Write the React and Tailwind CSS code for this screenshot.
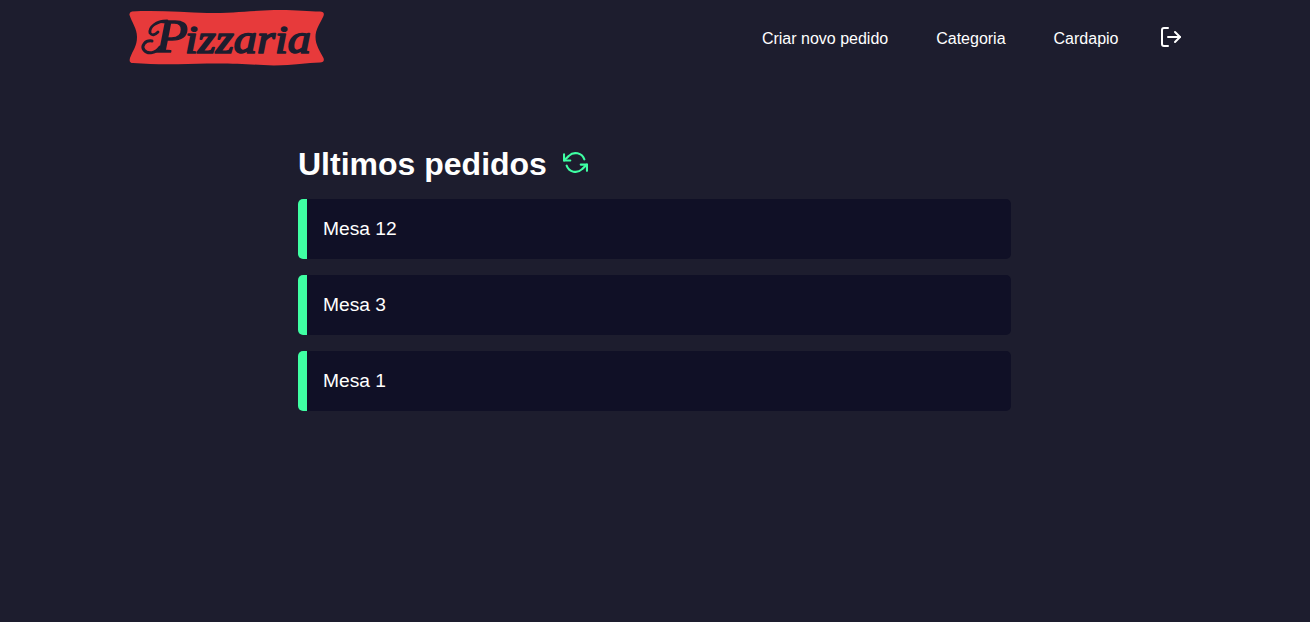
import { FiLogOut, FiRefreshCcw } from "react-icons/fi";

const links = ["Criar novo pedido", "Categoria", "Cardapio"];
const orders = ["Mesa 12", "Mesa 3", "Mesa 1"];

function Logo() {
  return (
    <svg width="196" height="58" viewBox="0 0 196 58" role="img" aria-label="Pizzaria">
      <path
        d="M3 2.500 C30 1 55 3.500 78 4 C105 4 120 2 145 1 C165 .5 178 2.500 191 2.500 Q196 2.500 194.500 7 C191 15 186.500 20 186.500 28 C186.500 36 191 42 194.500 49 Q196 53.500 191 53.500 C178 53.500 165 56.500 145 56.500 C120 55.500 105 54 78 54.500 C55 55 30 56 4 54 Q-.5 54 1 49 C4 41 8 37 8 28 C8 19 3 14 .5 6 Q0 3 3 2.500Z"
        fill="#e73a3b"
      />
      <g
        fill="#1d1d2e"
        stroke="#1d1d2e"
        strokeLinejoin="round"
        strokeLinecap="round"
        className="font-['Liberation_Serif',serif] italic"
      >
        <path d="M38 12 C27 12 20 18 21 24 Q24 28 29 23" fill="none" strokeWidth="2.800" />
        <path d="M23 32 C16 31 12 37 15 41 C19 46 27 44 31 38" fill="none" strokeWidth="3" />
        <text x="27" y="43" fontSize="46" strokeWidth="1.500" textLength="32" lengthAdjust="spacingAndGlyphs">P</text>
        <text x="56" y="43.500" fontSize="41" strokeWidth="1.700" textLength="126" lengthAdjust="spacingAndGlyphs">izzaria</text>
      </g>
    </svg>
  );
}

export default function App() {
  return (
    <div className="min-h-screen bg-[#1d1d2e] font-['Liberation_Sans',Arial,sans-serif] text-white">
      <header className="flex h-[76px] items-center justify-between pr-[127px] pl-[129px]">
        <a href="#"><Logo /></a>
        <nav className="flex items-center">
          {links.map((label) => (
            <a key={label} href="#" className="mr-12 pt-0.5 text-base leading-6 last-of-type:mr-[40.5px]">{label}</a>
          ))}
          <button aria-label="Sair" className="mb-0.5"><FiLogOut size={24} /></button>
        </nav>
      </header>
      <main className="ml-[298px] w-[713px] pt-[68px]">
        <div className="flex h-10 items-center">
          <h1 className="text-[32px] leading-10 font-bold">Ultimos pedidos</h1>
          <button aria-label="Atualizar" className="mb-[3px] ml-4 text-[#3fffa3]"><FiRefreshCcw size={25} /></button>
        </div>
        <section className="mt-[15px] flex flex-col gap-4">
          {orders.map((order) => (
            <button key={order} className="flex h-[60px] items-center overflow-hidden rounded-[5px] bg-[#101026] text-[19.2px]">
              <span className="mr-4 h-full w-[9px] bg-[#3fffa3]" />
              <span>{order}</span>
            </button>
          ))}
        </section>
      </main>
    </div>
  );
}
